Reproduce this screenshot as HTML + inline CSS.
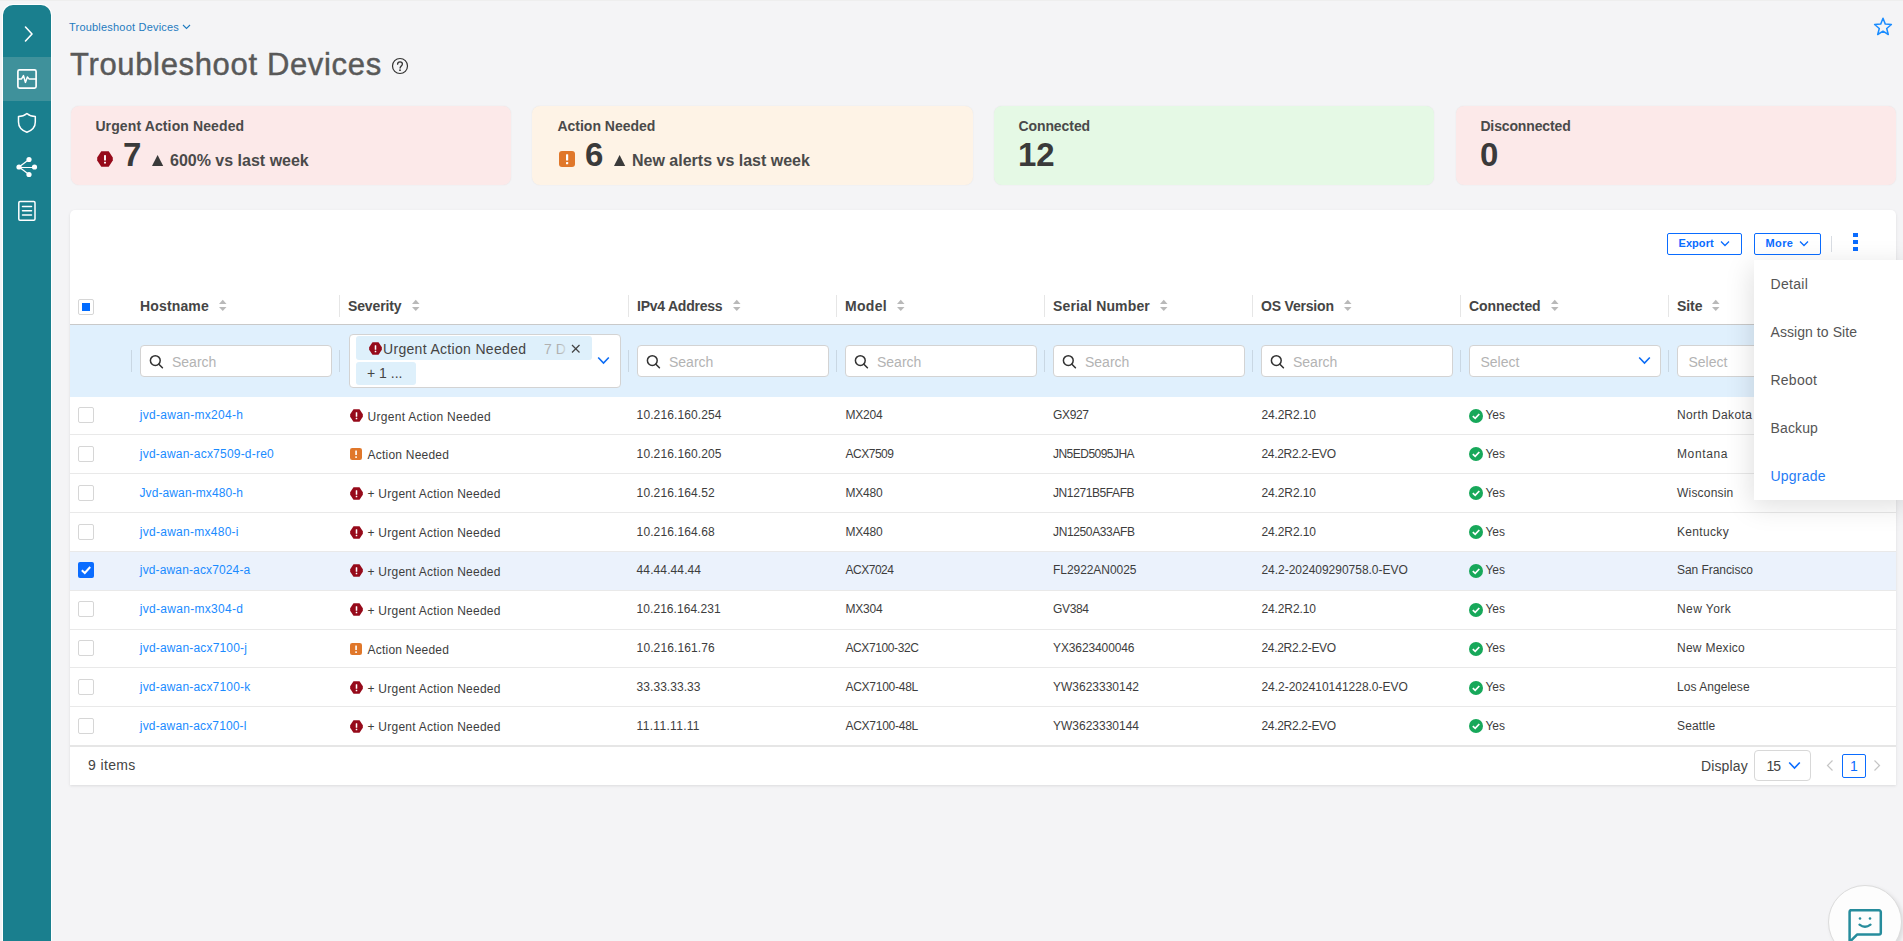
<!DOCTYPE html>
<html><head><meta charset="utf-8">
<style>
*{box-sizing:border-box;margin:0;padding:0}
html,body{width:1903px;height:941px;overflow:hidden}
body{position:relative;background:#f4f4f6;font-family:"Liberation Sans",sans-serif;color:#444}
.a{position:absolute}
.t{position:absolute;line-height:1;white-space:nowrap}
svg{position:absolute;overflow:visible}
</style></head>
<body>

<div class="a" style="left:0px;top:0px;width:1903px;height:1px;background:#eeeeee"></div>
<div class="a" style="left:3px;top:5px;width:48px;height:940px;background:#1a7f8e;border-radius:10px 10px 0 0;box-shadow:0 0 0 1px #fff"></div>
<div class="a" style="left:3px;top:57px;width:48px;height:44px;background:#3f919b"></div>
<svg style="left:0;top:0" width="60" height="240"><g fill="none" stroke="#fff" stroke-linecap="round" stroke-linejoin="round"><polyline points="25.5,27 32,34 25.5,41" stroke-width="1.6"/><rect x="17.9" y="69.9" width="18.2" height="18.2" rx="1.6" stroke-width="1.7"/><polyline points="18,78.9 21.6,78.9 23.5,75.6 25.4,82.4 27.4,76.9 29,78.9 36,78.9" stroke-width="1.5"/><path d="M26.9,113.5 C24.5,115.5 21.5,116.5 18.5,116.5 L18.5,122 C18.5,127 22,130.5 26.9,132.3 C31.8,130.5 35.3,127 35.3,122 L35.3,116.5 C32.3,116.5 29.3,115.5 26.9,113.5 Z" stroke-width="1.5"/><line x1="19" y1="167.5" x2="34.5" y2="167.5" stroke-width="1.2"/><line x1="19" y1="167" x2="29" y2="159.5" stroke-width="1.2"/><line x1="19" y1="167" x2="29" y2="174.5" stroke-width="1.2"/><rect x="18.8" y="201.5" width="16.2" height="18.8" rx="1.2" stroke-width="1.5"/><line x1="22.5" y1="206.5" x2="31.5" y2="206.5" stroke-width="1.5"/><line x1="22.5" y1="210.8" x2="31.5" y2="210.8" stroke-width="1.5"/><line x1="22.5" y1="215" x2="31.5" y2="215" stroke-width="1.5"/></g><g fill="#fff"><circle cx="19" cy="167" r="2.6"/><circle cx="34.5" cy="167" r="2.6"/><circle cx="29" cy="159.5" r="2.6"/><circle cx="29" cy="174.5" r="2.6"/></g></svg>
<div class="t" style="left:69.00px;top:22px;font-size:11px;color:#1f7bbf;letter-spacing:0.204px;">Troubleshoot Devices</div>
<svg style="left:182px;top:23px" width="10" height="8"><polyline points="1,2 4.5,5.5 8,2" fill="none" stroke="#1f7bbf" stroke-width="1.1"/></svg>
<div class="t" style="left:70.00px;top:49px;font-size:31px;color:#595959;letter-spacing:0.656px;-webkit-text-stroke:0.45px #595959;">Troubleshoot Devices</div>
<svg style="left:391px;top:57px" width="18" height="18"><circle cx="9" cy="9" r="7.5" fill="none" stroke="#333" stroke-width="1.2"/><path d="M6.6,7.2 C6.6,5.6 7.7,4.8 9,4.8 C10.4,4.8 11.4,5.7 11.4,7 C11.4,8.6 9.2,9.4 9.1,11" fill="none" stroke="#333" stroke-width="1.3" stroke-linecap="round"/><circle cx="9" cy="13.2" r="0.9" fill="#333"/></svg>
<svg style="left:1870px;top:14px" width="26" height="26"><path d="M13,4.3 L15.3,10.1 L21.4,10.5 L16.7,14.5 L18.3,20.5 L13,17.2 L7.7,20.5 L9.3,14.5 L4.6,10.5 L10.7,10.1 Z" fill="none" stroke="#1a8cff" stroke-width="1.5" stroke-linejoin="round"/></svg>
<div class="a" style="left:70.8px;top:106px;width:440.2px;height:79px;background:#fce9e9;border-radius:8px;box-shadow:0 0 1.5px rgba(0,0,0,.08)"></div>
<div class="t" style="left:95.40px;top:119px;font-size:14px;color:#4a4a4a;font-weight:bold;letter-spacing:0.119px;">Urgent Action Needed</div>
<svg style="left:97px;top:151px" width="16" height="16" viewBox="0 0 16 16"><polygon points="4.3,0.3 11.7,0.3 15.8,6.4 15.8,9.6 11.7,15.7 4.3,15.7 0.2,9.6 0.2,6.4" fill="#960a1a"/><rect x="7.05" y="4" width="1.9" height="5.6" rx="0.4" fill="#fff"/><rect x="7.05" y="10.8" width="1.9" height="1.7" rx="0.3" fill="#fff"/></svg>
<div class="t" style="left:123.00px;top:138px;font-size:33px;color:#3a3a3a;font-weight:bold;">7</div>
<svg style="left:151.7px;top:155px" width="12" height="12"><polygon points="5.6,0 11.2,11 0,11" fill="#3a3a3a"/></svg>
<div class="t" style="left:170.00px;top:153px;font-size:16px;color:#4a4a4a;font-weight:bold;">600% vs last week</div>
<div class="a" style="left:532.4px;top:106px;width:440.2px;height:79px;background:#fef3e6;border-radius:8px;box-shadow:0 0 1.5px rgba(0,0,0,.08)"></div>
<div class="t" style="left:557.40px;top:119px;font-size:14px;color:#4a4a4a;font-weight:bold;letter-spacing:0.000px;">Action Needed</div>
<svg style="left:559px;top:151px" width="16" height="16" viewBox="0 0 16 16"><rect x="0" y="0" width="16" height="16" rx="3" fill="#e0772a"/><rect x="7" y="3.2" width="2.2" height="6.2" rx="0.5" fill="#fff"/><rect x="7" y="11" width="2.2" height="2.2" rx="0.5" fill="#fff"/></svg>
<div class="t" style="left:585.00px;top:138px;font-size:33px;color:#3a3a3a;font-weight:bold;">6</div>
<svg style="left:613.7px;top:155px" width="12" height="12"><polygon points="5.6,0 11.2,11 0,11" fill="#3a3a3a"/></svg>
<div class="t" style="left:632.00px;top:153px;font-size:16px;color:#4a4a4a;font-weight:bold;">New alerts vs last week</div>
<div class="a" style="left:994.0px;top:106px;width:440.2px;height:79px;background:#e5f9e5;border-radius:8px;box-shadow:0 0 1.5px rgba(0,0,0,.08)"></div>
<div class="t" style="left:1018.40px;top:119px;font-size:14px;color:#4a4a4a;font-weight:bold;letter-spacing:-0.072px;">Connected</div>
<div class="t" style="left:1018.00px;top:138px;font-size:33px;color:#3a3a3a;font-weight:bold;">12</div>
<div class="a" style="left:1455.6px;top:106px;width:440.2px;height:79px;background:#fce9e9;border-radius:8px;box-shadow:0 0 1.5px rgba(0,0,0,.08)"></div>
<div class="t" style="left:1480.40px;top:119px;font-size:14px;color:#4a4a4a;font-weight:bold;letter-spacing:-0.131px;">Disconnected</div>
<div class="t" style="left:1480.00px;top:138px;font-size:33px;color:#3a3a3a;font-weight:bold;">0</div>
<div class="a" style="left:70px;top:210px;width:1826px;height:575px;background:#fff;border-radius:5px 5px 0 0;box-shadow:0 1px 3px rgba(0,0,0,.10)"></div>
<div class="a" style="left:1667px;top:233px;width:75px;height:22px;border:1px solid #0a6cff;border-radius:2px;background:#fff"></div><div class="t" style="left:1678.50px;top:238px;font-size:11px;color:#0a6cff;font-weight:bold;letter-spacing:0.066px;">Export</div><svg style="left:1719.7px;top:240px" width="12" height="8"><polyline points="1,1.5 5,5.5 9,1.5" fill="none" stroke="#0a6cff" stroke-width="1.3"/></svg>
<div class="a" style="left:1754px;top:233px;width:67px;height:22px;border:1px solid #0a6cff;border-radius:2px;background:#fff"></div><div class="t" style="left:1765.50px;top:238px;font-size:11px;color:#0a6cff;font-weight:bold;letter-spacing:0.403px;">More</div><svg style="left:1799.0px;top:240px" width="12" height="8"><polyline points="1,1.5 5,5.5 9,1.5" fill="none" stroke="#0a6cff" stroke-width="1.3"/></svg>
<div class="a" style="left:1831px;top:236px;width:1px;height:16px;background:#d9dde3"></div>
<div class="a" style="left:1853px;top:233.3px;width:4.5px;height:4px;background:#0a6cff"></div>
<div class="a" style="left:1853px;top:240.1px;width:4.5px;height:4px;background:#0a6cff"></div>
<div class="a" style="left:1853px;top:246.9px;width:4.5px;height:4px;background:#0a6cff"></div>
<div class="t" style="left:140.00px;top:299px;font-size:14px;color:#454545;font-weight:bold;letter-spacing:0.154px;">Hostname</div>
<svg style="left:219px;top:299px" width="9" height="13"><polygon points="3.75,0.8 7.5,5 0,5" fill="#b9b9b9"/><polygon points="0,7.9 7.5,7.9 3.75,12" fill="#b9b9b9"/></svg>
<div class="t" style="left:348.00px;top:299px;font-size:14px;color:#454545;font-weight:bold;letter-spacing:-0.129px;">Severity</div>
<svg style="left:412px;top:299px" width="9" height="13"><polygon points="3.75,0.8 7.5,5 0,5" fill="#b9b9b9"/><polygon points="0,7.9 7.5,7.9 3.75,12" fill="#b9b9b9"/></svg>
<div class="a" style="left:339px;top:295px;width:1px;height:22px;background:#e6e6e6"></div>
<div class="t" style="left:637.00px;top:299px;font-size:14px;color:#454545;font-weight:bold;letter-spacing:-0.236px;">IPv4 Address</div>
<svg style="left:733px;top:299px" width="9" height="13"><polygon points="3.75,0.8 7.5,5 0,5" fill="#b9b9b9"/><polygon points="0,7.9 7.5,7.9 3.75,12" fill="#b9b9b9"/></svg>
<div class="a" style="left:628px;top:295px;width:1px;height:22px;background:#e6e6e6"></div>
<div class="t" style="left:845.00px;top:299px;font-size:14px;color:#454545;font-weight:bold;letter-spacing:0.310px;">Model</div>
<svg style="left:897px;top:299px" width="9" height="13"><polygon points="3.75,0.8 7.5,5 0,5" fill="#b9b9b9"/><polygon points="0,7.9 7.5,7.9 3.75,12" fill="#b9b9b9"/></svg>
<div class="a" style="left:836px;top:295px;width:1px;height:22px;background:#e6e6e6"></div>
<div class="t" style="left:1053.00px;top:299px;font-size:14px;color:#454545;font-weight:bold;letter-spacing:0.157px;">Serial Number</div>
<svg style="left:1160px;top:299px" width="9" height="13"><polygon points="3.75,0.8 7.5,5 0,5" fill="#b9b9b9"/><polygon points="0,7.9 7.5,7.9 3.75,12" fill="#b9b9b9"/></svg>
<div class="a" style="left:1044px;top:295px;width:1px;height:22px;background:#e6e6e6"></div>
<div class="t" style="left:1261.00px;top:299px;font-size:14px;color:#454545;font-weight:bold;letter-spacing:-0.196px;">OS Version</div>
<svg style="left:1344px;top:299px" width="9" height="13"><polygon points="3.75,0.8 7.5,5 0,5" fill="#b9b9b9"/><polygon points="0,7.9 7.5,7.9 3.75,12" fill="#b9b9b9"/></svg>
<div class="a" style="left:1252px;top:295px;width:1px;height:22px;background:#e6e6e6"></div>
<div class="t" style="left:1469.00px;top:299px;font-size:14px;color:#454545;font-weight:bold;letter-spacing:-0.085px;">Connected</div>
<svg style="left:1551px;top:299px" width="9" height="13"><polygon points="3.75,0.8 7.5,5 0,5" fill="#b9b9b9"/><polygon points="0,7.9 7.5,7.9 3.75,12" fill="#b9b9b9"/></svg>
<div class="a" style="left:1460px;top:295px;width:1px;height:22px;background:#e6e6e6"></div>
<div class="t" style="left:1677.00px;top:299px;font-size:14px;color:#454545;font-weight:bold;letter-spacing:-0.073px;">Site</div>
<svg style="left:1712px;top:299px" width="9" height="13"><polygon points="3.75,0.8 7.5,5 0,5" fill="#b9b9b9"/><polygon points="0,7.9 7.5,7.9 3.75,12" fill="#b9b9b9"/></svg>
<div class="a" style="left:1668px;top:295px;width:1px;height:22px;background:#e6e6e6"></div>
<div class="a" style="left:78px;top:299px;width:16px;height:16px;border:1px solid #d6d6d6;border-radius:2px;background:#fff"></div>
<div class="a" style="left:82px;top:303px;width:8px;height:8px;background:#006bff"></div>
<div class="a" style="left:70px;top:324px;width:1826px;height:1px;background:#c9c9c9"></div>
<div class="a" style="left:70px;top:325px;width:1826px;height:71.5px;background:#e0f0fd"></div>
<div class="a" style="left:131px;top:350px;width:1px;height:22px;background:#c9d7e3"></div>
<div class="a" style="left:339px;top:350px;width:1px;height:22px;background:#c9d7e3"></div>
<div class="a" style="left:628px;top:350px;width:1px;height:22px;background:#c9d7e3"></div>
<div class="a" style="left:836px;top:350px;width:1px;height:22px;background:#c9d7e3"></div>
<div class="a" style="left:1044px;top:350px;width:1px;height:22px;background:#c9d7e3"></div>
<div class="a" style="left:1252px;top:350px;width:1px;height:22px;background:#c9d7e3"></div>
<div class="a" style="left:1460px;top:350px;width:1px;height:22px;background:#c9d7e3"></div>
<div class="a" style="left:1668px;top:350px;width:1px;height:22px;background:#c9d7e3"></div>
<div class="a" style="left:140px;top:345px;width:192px;height:32px;background:#fff;border:1px solid #d3d3d3;border-radius:4px"></div><svg style="left:149px;top:354px" width="16" height="16"><circle cx="6.3" cy="6.6" r="4.9" fill="none" stroke="#333" stroke-width="1.5"/><line x1="9.9" y1="10.2" x2="13.4" y2="13.7" stroke="#333" stroke-width="1.6" stroke-linecap="round"/></svg><div class="t" style="left:172.00px;top:355px;font-size:14px;color:#b3b3b3;">Search</div>
<div class="a" style="left:637px;top:345px;width:192px;height:32px;background:#fff;border:1px solid #d3d3d3;border-radius:4px"></div><svg style="left:646px;top:354px" width="16" height="16"><circle cx="6.3" cy="6.6" r="4.9" fill="none" stroke="#333" stroke-width="1.5"/><line x1="9.9" y1="10.2" x2="13.4" y2="13.7" stroke="#333" stroke-width="1.6" stroke-linecap="round"/></svg><div class="t" style="left:669.00px;top:355px;font-size:14px;color:#b3b3b3;">Search</div>
<div class="a" style="left:845px;top:345px;width:192px;height:32px;background:#fff;border:1px solid #d3d3d3;border-radius:4px"></div><svg style="left:854px;top:354px" width="16" height="16"><circle cx="6.3" cy="6.6" r="4.9" fill="none" stroke="#333" stroke-width="1.5"/><line x1="9.9" y1="10.2" x2="13.4" y2="13.7" stroke="#333" stroke-width="1.6" stroke-linecap="round"/></svg><div class="t" style="left:877.00px;top:355px;font-size:14px;color:#b3b3b3;">Search</div>
<div class="a" style="left:1053px;top:345px;width:192px;height:32px;background:#fff;border:1px solid #d3d3d3;border-radius:4px"></div><svg style="left:1062px;top:354px" width="16" height="16"><circle cx="6.3" cy="6.6" r="4.9" fill="none" stroke="#333" stroke-width="1.5"/><line x1="9.9" y1="10.2" x2="13.4" y2="13.7" stroke="#333" stroke-width="1.6" stroke-linecap="round"/></svg><div class="t" style="left:1085.00px;top:355px;font-size:14px;color:#b3b3b3;">Search</div>
<div class="a" style="left:1261px;top:345px;width:192px;height:32px;background:#fff;border:1px solid #d3d3d3;border-radius:4px"></div><svg style="left:1270px;top:354px" width="16" height="16"><circle cx="6.3" cy="6.6" r="4.9" fill="none" stroke="#333" stroke-width="1.5"/><line x1="9.9" y1="10.2" x2="13.4" y2="13.7" stroke="#333" stroke-width="1.6" stroke-linecap="round"/></svg><div class="t" style="left:1293.00px;top:355px;font-size:14px;color:#b3b3b3;">Search</div>
<div class="a" style="left:349px;top:334px;width:272px;height:54px;background:#fff;border:1px solid #d3d3d3;border-radius:4px"></div>
<div class="a" style="left:356px;top:336px;width:236px;height:24px;background:#def0fb;border-radius:3px"></div>
<svg style="left:368.5px;top:342px" width="13" height="13" viewBox="0 0 16 16"><polygon points="4.3,0.3 11.7,0.3 15.8,6.4 15.8,9.6 11.7,15.7 4.3,15.7 0.2,9.6 0.2,6.4" fill="#960a1a"/><rect x="7.05" y="4" width="1.9" height="5.6" rx="0.4" fill="#fff"/><rect x="7.05" y="10.8" width="1.9" height="1.7" rx="0.3" fill="#fff"/></svg>
<div class="t" style="left:383.00px;top:342px;font-size:14px;color:#444;letter-spacing:0.320px;">Urgent Action Needed</div>
<div class="t" style="left:544.00px;top:342px;font-size:14px;color:#b0b0b0;">7 D</div>
<div class="a" style="left:559px;top:338px;width:12px;height:20px;background:linear-gradient(to right,rgba(222,240,251,0),#def0fb 85%)"></div>
<svg style="left:570px;top:343px" width="12" height="12"><g stroke="#444" stroke-width="1.3"><line x1="2" y1="2" x2="9.5" y2="9.5"/><line x1="9.5" y1="2" x2="2" y2="9.5"/></g></svg>
<div class="a" style="left:356px;top:362px;width:60px;height:23px;background:#def0fb;border-radius:3px"></div>
<div class="t" style="left:367.00px;top:366px;font-size:14px;color:#444;">+ 1 ...</div>
<svg style="left:597px;top:356px" width="14" height="10"><polyline points="1.2,1.5 6.5,7 11.8,1.5" fill="none" stroke="#0b6cf5" stroke-width="1.6"/></svg>
<div class="a" style="left:1469px;top:345px;width:192px;height:32px;background:#fff;border:1px solid #d3d3d3;border-radius:4px"></div><div class="t" style="left:1480.50px;top:355px;font-size:14px;color:#b3b3b3;">Select</div><svg style="left:1638px;top:356px" width="14" height="10"><polyline points="1.2,1.5 6.5,7 11.8,1.5" fill="none" stroke="#0b6cf5" stroke-width="1.6"/></svg>
<div class="a" style="left:1677px;top:345px;width:192px;height:32px;background:#fff;border:1px solid #d3d3d3;border-radius:4px"></div><div class="t" style="left:1688.50px;top:355px;font-size:14px;color:#b3b3b3;">Select</div>
<div class="a" style="left:70px;top:434.35px;width:1826px;height:1px;background:#e9e9e9"></div>
<div class="a" style="left:78px;top:407.0px;width:16px;height:16px;border:1px solid #d6d6d6;border-radius:2px;background:#fff"></div>
<div class="t" style="left:139.86px;top:409px;font-size:12px;color:#1a8bff;letter-spacing:0.292px;">jvd-awan-mx204-h</div>
<svg style="left:349.5px;top:409.0px" width="13" height="13" viewBox="0 0 16 16"><polygon points="4.3,0.3 11.7,0.3 15.8,6.4 15.8,9.6 11.7,15.7 4.3,15.7 0.2,9.6 0.2,6.4" fill="#960a1a"/><rect x="7.05" y="4" width="1.9" height="5.6" rx="0.4" fill="#fff"/><rect x="7.05" y="10.8" width="1.9" height="1.7" rx="0.3" fill="#fff"/></svg>
<div class="t" style="left:367.50px;top:411px;font-size:12px;color:#3d3d3d;letter-spacing:0.302px;">Urgent Action Needed</div>
<div class="t" style="left:636.60px;top:409px;font-size:12px;color:#3d3d3d;letter-spacing:0.108px;">10.216.160.254</div>
<div class="t" style="left:845.40px;top:409px;font-size:12px;color:#3d3d3d;letter-spacing:-0.160px;">MX204</div>
<div class="t" style="left:1053.00px;top:409px;font-size:12px;color:#3d3d3d;letter-spacing:-0.330px;">GX927</div>
<div class="t" style="left:1261.40px;top:409px;font-size:12px;color:#3d3d3d;letter-spacing:-0.103px;">24.2R2.10</div>
<svg style="left:1469px;top:408.60px" width="14" height="14"><circle cx="7" cy="7" r="7" fill="#17a85a"/><polyline points="3.8,7.2 6.2,9.4 10.3,5" fill="none" stroke="#fff" stroke-width="1.7"/></svg>
<div class="t" style="left:1485.50px;top:409px;font-size:12px;color:#3d3d3d;letter-spacing:-0.030px;">Yes</div>
<div class="t" style="left:1677.00px;top:409px;font-size:12px;color:#3d3d3d;letter-spacing:0.382px;">North Dakota</div>
<div class="a" style="left:70px;top:473.20000000000005px;width:1826px;height:1px;background:#e9e9e9"></div>
<div class="a" style="left:78px;top:445.85px;width:16px;height:16px;border:1px solid #d6d6d6;border-radius:2px;background:#fff"></div>
<div class="t" style="left:139.86px;top:448px;font-size:12px;color:#1a8bff;letter-spacing:0.213px;">jvd-awan-acx7509-d-re0</div>
<svg style="left:350px;top:448.35px" width="12" height="12" viewBox="0 0 16 16"><rect x="0" y="0" width="16" height="16" rx="3" fill="#e0772a"/><rect x="7" y="3.2" width="2.2" height="6.2" rx="0.5" fill="#fff"/><rect x="7" y="11" width="2.2" height="2.2" rx="0.5" fill="#fff"/></svg>
<div class="t" style="left:367.50px;top:449px;font-size:12px;color:#3d3d3d;letter-spacing:0.223px;">Action Needed</div>
<div class="t" style="left:636.60px;top:448px;font-size:12px;color:#3d3d3d;letter-spacing:0.108px;">10.216.160.205</div>
<div class="t" style="left:845.40px;top:448px;font-size:12px;color:#3d3d3d;letter-spacing:-0.460px;">ACX7509</div>
<div class="t" style="left:1053.00px;top:448px;font-size:12px;color:#3d3d3d;letter-spacing:-0.524px;">JN5ED5095JHA</div>
<div class="t" style="left:1261.40px;top:448px;font-size:12px;color:#3d3d3d;letter-spacing:-0.300px;">24.2R2.2-EVO</div>
<svg style="left:1469px;top:447.45px" width="14" height="14"><circle cx="7" cy="7" r="7" fill="#17a85a"/><polyline points="3.8,7.2 6.2,9.4 10.3,5" fill="none" stroke="#fff" stroke-width="1.7"/></svg>
<div class="t" style="left:1485.50px;top:448px;font-size:12px;color:#3d3d3d;letter-spacing:-0.030px;">Yes</div>
<div class="t" style="left:1677.00px;top:448px;font-size:12px;color:#3d3d3d;letter-spacing:0.617px;">Montana</div>
<div class="a" style="left:70px;top:512.05px;width:1826px;height:1px;background:#e9e9e9"></div>
<div class="a" style="left:78px;top:484.7px;width:16px;height:16px;border:1px solid #d6d6d6;border-radius:2px;background:#fff"></div>
<div class="t" style="left:139.50px;top:487px;font-size:12px;color:#1a8bff;letter-spacing:0.100px;">Jvd-awan-mx480-h</div>
<svg style="left:349.5px;top:486.7px" width="13" height="13" viewBox="0 0 16 16"><polygon points="4.3,0.3 11.7,0.3 15.8,6.4 15.8,9.6 11.7,15.7 4.3,15.7 0.2,9.6 0.2,6.4" fill="#960a1a"/><rect x="7.05" y="4" width="1.9" height="5.6" rx="0.4" fill="#fff"/><rect x="7.05" y="10.8" width="1.9" height="1.7" rx="0.3" fill="#fff"/></svg>
<div class="t" style="left:367.50px;top:488px;font-size:12px;color:#3d3d3d;letter-spacing:0.248px;">+ Urgent Action Needed</div>
<div class="t" style="left:636.60px;top:487px;font-size:12px;color:#3d3d3d;letter-spacing:0.110px;">10.216.164.52</div>
<div class="t" style="left:845.40px;top:487px;font-size:12px;color:#3d3d3d;letter-spacing:-0.210px;">MX480</div>
<div class="t" style="left:1053.00px;top:487px;font-size:12px;color:#3d3d3d;letter-spacing:-0.404px;">JN1271B5FAFB</div>
<div class="t" style="left:1261.40px;top:487px;font-size:12px;color:#3d3d3d;letter-spacing:-0.103px;">24.2R2.10</div>
<svg style="left:1469px;top:486.30px" width="14" height="14"><circle cx="7" cy="7" r="7" fill="#17a85a"/><polyline points="3.8,7.2 6.2,9.4 10.3,5" fill="none" stroke="#fff" stroke-width="1.7"/></svg>
<div class="t" style="left:1485.50px;top:487px;font-size:12px;color:#3d3d3d;letter-spacing:-0.030px;">Yes</div>
<div class="t" style="left:1677.00px;top:487px;font-size:12px;color:#3d3d3d;letter-spacing:0.197px;">Wisconsin</div>
<div class="a" style="left:70px;top:550.9px;width:1826px;height:1px;background:#e9e9e9"></div>
<div class="a" style="left:78px;top:523.55px;width:16px;height:16px;border:1px solid #d6d6d6;border-radius:2px;background:#fff"></div>
<div class="t" style="left:139.86px;top:526px;font-size:12px;color:#1a8bff;letter-spacing:0.264px;">jvd-awan-mx480-i</div>
<svg style="left:349.5px;top:525.55px" width="13" height="13" viewBox="0 0 16 16"><polygon points="4.3,0.3 11.7,0.3 15.8,6.4 15.8,9.6 11.7,15.7 4.3,15.7 0.2,9.6 0.2,6.4" fill="#960a1a"/><rect x="7.05" y="4" width="1.9" height="5.6" rx="0.4" fill="#fff"/><rect x="7.05" y="10.8" width="1.9" height="1.7" rx="0.3" fill="#fff"/></svg>
<div class="t" style="left:367.50px;top:527px;font-size:12px;color:#3d3d3d;letter-spacing:0.248px;">+ Urgent Action Needed</div>
<div class="t" style="left:636.60px;top:526px;font-size:12px;color:#3d3d3d;letter-spacing:0.110px;">10.216.164.68</div>
<div class="t" style="left:845.40px;top:526px;font-size:12px;color:#3d3d3d;letter-spacing:-0.210px;">MX480</div>
<div class="t" style="left:1053.00px;top:526px;font-size:12px;color:#3d3d3d;letter-spacing:-0.367px;">JN1250A33AFB</div>
<div class="t" style="left:1261.40px;top:526px;font-size:12px;color:#3d3d3d;letter-spacing:-0.103px;">24.2R2.10</div>
<svg style="left:1469px;top:525.15px" width="14" height="14"><circle cx="7" cy="7" r="7" fill="#17a85a"/><polyline points="3.8,7.2 6.2,9.4 10.3,5" fill="none" stroke="#fff" stroke-width="1.7"/></svg>
<div class="t" style="left:1485.50px;top:526px;font-size:12px;color:#3d3d3d;letter-spacing:-0.030px;">Yes</div>
<div class="t" style="left:1677.00px;top:526px;font-size:12px;color:#3d3d3d;letter-spacing:0.326px;">Kentucky</div>
<div class="a" style="left:70px;top:551.9px;width:1826px;height:38.85px;background:#ebf2fc"></div>
<div class="a" style="left:70px;top:589.75px;width:1826px;height:1px;background:#e9e9e9"></div>
<div class="a" style="left:78px;top:562.4px;width:16px;height:16px;background:#0a6cff;border-radius:2px"></div>
<svg style="left:78px;top:562.40px" width="16" height="16"><polyline points="3.8,8.2 6.8,11 12.2,5" fill="none" stroke="#fff" stroke-width="2"/></svg>
<div class="t" style="left:139.86px;top:564px;font-size:12px;color:#1a8bff;letter-spacing:0.136px;">jvd-awan-acx7024-a</div>
<svg style="left:349.5px;top:564.4px" width="13" height="13" viewBox="0 0 16 16"><polygon points="4.3,0.3 11.7,0.3 15.8,6.4 15.8,9.6 11.7,15.7 4.3,15.7 0.2,9.6 0.2,6.4" fill="#960a1a"/><rect x="7.05" y="4" width="1.9" height="5.6" rx="0.4" fill="#fff"/><rect x="7.05" y="10.8" width="1.9" height="1.7" rx="0.3" fill="#fff"/></svg>
<div class="t" style="left:367.50px;top:566px;font-size:12px;color:#3d3d3d;letter-spacing:0.248px;">+ Urgent Action Needed</div>
<div class="t" style="left:636.60px;top:564px;font-size:12px;color:#3d3d3d;letter-spacing:0.104px;">44.44.44.44</div>
<div class="t" style="left:845.40px;top:564px;font-size:12px;color:#3d3d3d;letter-spacing:-0.460px;">ACX7024</div>
<div class="t" style="left:1053.00px;top:564px;font-size:12px;color:#3d3d3d;letter-spacing:-0.055px;">FL2922AN0025</div>
<div class="t" style="left:1261.40px;top:564px;font-size:12px;color:#3d3d3d;letter-spacing:-0.016px;">24.2-202409290758.0-EVO</div>
<svg style="left:1469px;top:564.00px" width="14" height="14"><circle cx="7" cy="7" r="7" fill="#17a85a"/><polyline points="3.8,7.2 6.2,9.4 10.3,5" fill="none" stroke="#fff" stroke-width="1.7"/></svg>
<div class="t" style="left:1485.50px;top:564px;font-size:12px;color:#3d3d3d;letter-spacing:-0.030px;">Yes</div>
<div class="t" style="left:1677.00px;top:564px;font-size:12px;color:#3d3d3d;letter-spacing:-0.057px;">San Francisco</div>
<div class="a" style="left:70px;top:628.6px;width:1826px;height:1px;background:#e9e9e9"></div>
<div class="a" style="left:78px;top:601.25px;width:16px;height:16px;border:1px solid #d6d6d6;border-radius:2px;background:#fff"></div>
<div class="t" style="left:139.86px;top:603px;font-size:12px;color:#1a8bff;letter-spacing:0.292px;">jvd-awan-mx304-d</div>
<svg style="left:349.5px;top:603.25px" width="13" height="13" viewBox="0 0 16 16"><polygon points="4.3,0.3 11.7,0.3 15.8,6.4 15.8,9.6 11.7,15.7 4.3,15.7 0.2,9.6 0.2,6.4" fill="#960a1a"/><rect x="7.05" y="4" width="1.9" height="5.6" rx="0.4" fill="#fff"/><rect x="7.05" y="10.8" width="1.9" height="1.7" rx="0.3" fill="#fff"/></svg>
<div class="t" style="left:367.50px;top:605px;font-size:12px;color:#3d3d3d;letter-spacing:0.248px;">+ Urgent Action Needed</div>
<div class="t" style="left:636.60px;top:603px;font-size:12px;color:#3d3d3d;letter-spacing:0.046px;">10.216.164.231</div>
<div class="t" style="left:845.40px;top:603px;font-size:12px;color:#3d3d3d;letter-spacing:-0.160px;">MX304</div>
<div class="t" style="left:1053.00px;top:603px;font-size:12px;color:#3d3d3d;letter-spacing:-0.330px;">GV384</div>
<div class="t" style="left:1261.40px;top:603px;font-size:12px;color:#3d3d3d;letter-spacing:-0.103px;">24.2R2.10</div>
<svg style="left:1469px;top:602.85px" width="14" height="14"><circle cx="7" cy="7" r="7" fill="#17a85a"/><polyline points="3.8,7.2 6.2,9.4 10.3,5" fill="none" stroke="#fff" stroke-width="1.7"/></svg>
<div class="t" style="left:1485.50px;top:603px;font-size:12px;color:#3d3d3d;letter-spacing:-0.030px;">Yes</div>
<div class="t" style="left:1677.00px;top:603px;font-size:12px;color:#3d3d3d;letter-spacing:0.434px;">New York</div>
<div class="a" style="left:70px;top:667.45px;width:1826px;height:1px;background:#e9e9e9"></div>
<div class="a" style="left:78px;top:640.1px;width:16px;height:16px;border:1px solid #d6d6d6;border-radius:2px;background:#fff"></div>
<div class="t" style="left:139.86px;top:642px;font-size:12px;color:#1a8bff;letter-spacing:0.176px;">jvd-awan-acx7100-j</div>
<svg style="left:350px;top:642.6px" width="12" height="12" viewBox="0 0 16 16"><rect x="0" y="0" width="16" height="16" rx="3" fill="#e0772a"/><rect x="7" y="3.2" width="2.2" height="6.2" rx="0.5" fill="#fff"/><rect x="7" y="11" width="2.2" height="2.2" rx="0.5" fill="#fff"/></svg>
<div class="t" style="left:367.50px;top:644px;font-size:12px;color:#3d3d3d;letter-spacing:0.223px;">Action Needed</div>
<div class="t" style="left:636.60px;top:642px;font-size:12px;color:#3d3d3d;letter-spacing:0.110px;">10.216.161.76</div>
<div class="t" style="left:845.40px;top:642px;font-size:12px;color:#3d3d3d;letter-spacing:-0.380px;">ACX7100-32C</div>
<div class="t" style="left:1053.00px;top:642px;font-size:12px;color:#3d3d3d;letter-spacing:-0.109px;">YX3623400046</div>
<div class="t" style="left:1261.40px;top:642px;font-size:12px;color:#3d3d3d;letter-spacing:-0.300px;">24.2R2.2-EVO</div>
<svg style="left:1469px;top:641.70px" width="14" height="14"><circle cx="7" cy="7" r="7" fill="#17a85a"/><polyline points="3.8,7.2 6.2,9.4 10.3,5" fill="none" stroke="#fff" stroke-width="1.7"/></svg>
<div class="t" style="left:1485.50px;top:642px;font-size:12px;color:#3d3d3d;letter-spacing:-0.030px;">Yes</div>
<div class="t" style="left:1677.00px;top:642px;font-size:12px;color:#3d3d3d;letter-spacing:0.267px;">New Mexico</div>
<div class="a" style="left:70px;top:706.3000000000001px;width:1826px;height:1px;background:#e9e9e9"></div>
<div class="a" style="left:78px;top:678.95px;width:16px;height:16px;border:1px solid #d6d6d6;border-radius:2px;background:#fff"></div>
<div class="t" style="left:139.86px;top:681px;font-size:12px;color:#1a8bff;letter-spacing:0.172px;">jvd-awan-acx7100-k</div>
<svg style="left:349.5px;top:680.95px" width="13" height="13" viewBox="0 0 16 16"><polygon points="4.3,0.3 11.7,0.3 15.8,6.4 15.8,9.6 11.7,15.7 4.3,15.7 0.2,9.6 0.2,6.4" fill="#960a1a"/><rect x="7.05" y="4" width="1.9" height="5.6" rx="0.4" fill="#fff"/><rect x="7.05" y="10.8" width="1.9" height="1.7" rx="0.3" fill="#fff"/></svg>
<div class="t" style="left:367.50px;top:683px;font-size:12px;color:#3d3d3d;letter-spacing:0.248px;">+ Urgent Action Needed</div>
<div class="t" style="left:636.60px;top:681px;font-size:12px;color:#3d3d3d;letter-spacing:0.044px;">33.33.33.33</div>
<div class="t" style="left:845.40px;top:681px;font-size:12px;color:#3d3d3d;letter-spacing:-0.256px;">ACX7100-48L</div>
<div class="t" style="left:1053.00px;top:681px;font-size:12px;color:#3d3d3d;letter-spacing:-0.004px;">YW3623330142</div>
<div class="t" style="left:1261.40px;top:681px;font-size:12px;color:#3d3d3d;letter-spacing:-0.016px;">24.2-202410141228.0-EVO</div>
<svg style="left:1469px;top:680.55px" width="14" height="14"><circle cx="7" cy="7" r="7" fill="#17a85a"/><polyline points="3.8,7.2 6.2,9.4 10.3,5" fill="none" stroke="#fff" stroke-width="1.7"/></svg>
<div class="t" style="left:1485.50px;top:681px;font-size:12px;color:#3d3d3d;letter-spacing:-0.030px;">Yes</div>
<div class="t" style="left:1677.00px;top:681px;font-size:12px;color:#3d3d3d;letter-spacing:0.045px;">Los Angelese</div>
<div class="a" style="left:78px;top:717.8px;width:16px;height:16px;border:1px solid #d6d6d6;border-radius:2px;background:#fff"></div>
<div class="t" style="left:139.86px;top:720px;font-size:12px;color:#1a8bff;letter-spacing:0.147px;">jvd-awan-acx7100-l</div>
<svg style="left:349.5px;top:719.8px" width="13" height="13" viewBox="0 0 16 16"><polygon points="4.3,0.3 11.7,0.3 15.8,6.4 15.8,9.6 11.7,15.7 4.3,15.7 0.2,9.6 0.2,6.4" fill="#960a1a"/><rect x="7.05" y="4" width="1.9" height="5.6" rx="0.4" fill="#fff"/><rect x="7.05" y="10.8" width="1.9" height="1.7" rx="0.3" fill="#fff"/></svg>
<div class="t" style="left:367.50px;top:721px;font-size:12px;color:#3d3d3d;letter-spacing:0.248px;">+ Urgent Action Needed</div>
<div class="t" style="left:636.60px;top:720px;font-size:12px;color:#3d3d3d;letter-spacing:0.312px;">11.11.11.11</div>
<div class="t" style="left:845.40px;top:720px;font-size:12px;color:#3d3d3d;letter-spacing:-0.256px;">ACX7100-48L</div>
<div class="t" style="left:1053.00px;top:720px;font-size:12px;color:#3d3d3d;letter-spacing:-0.004px;">YW3623330144</div>
<div class="t" style="left:1261.40px;top:720px;font-size:12px;color:#3d3d3d;letter-spacing:-0.300px;">24.2R2.2-EVO</div>
<svg style="left:1469px;top:719.40px" width="14" height="14"><circle cx="7" cy="7" r="7" fill="#17a85a"/><polyline points="3.8,7.2 6.2,9.4 10.3,5" fill="none" stroke="#fff" stroke-width="1.7"/></svg>
<div class="t" style="left:1485.50px;top:720px;font-size:12px;color:#3d3d3d;letter-spacing:-0.030px;">Yes</div>
<div class="t" style="left:1677.00px;top:720px;font-size:12px;color:#3d3d3d;letter-spacing:0.147px;">Seattle</div>
<div class="a" style="left:70px;top:745px;width:1826px;height:2px;background:#e6e6e6"></div>
<div class="t" style="left:88.00px;top:758px;font-size:14px;color:#444;letter-spacing:0.370px;">9 items</div>
<div class="t" style="left:1701.00px;top:759px;font-size:14px;color:#444;letter-spacing:0.130px;">Display</div>
<div class="a" style="left:1754px;top:750px;width:57px;height:31px;background:#fff;border:1px solid #d8d8d8;border-radius:4px"></div>
<div class="t" style="left:1766.50px;top:759px;font-size:14px;color:#444;letter-spacing:-1.040px;">15</div>
<svg style="left:1788px;top:761px" width="14" height="10"><polyline points="1.2,1.5 6.5,7 11.8,1.5" fill="none" stroke="#0a6cff" stroke-width="1.6"/></svg>
<svg style="left:1825px;top:759px" width="10" height="14"><polyline points="7.5,1.5 2.5,6.5 7.5,11.5" fill="none" stroke="#c5c5c5" stroke-width="1.2"/></svg>
<div class="a" style="left:1842px;top:754px;width:24px;height:24px;border:1px solid #0a6cff;border-radius:2px;background:#fff"></div>
<div class="t" style="left:1850.00px;top:759px;font-size:14px;color:#0a6cff;">1</div>
<svg style="left:1872px;top:759px" width="10" height="14"><polyline points="2.5,1.5 7.5,6.5 2.5,11.5" fill="none" stroke="#c5c5c5" stroke-width="1.2"/></svg>
<div class="a" style="left:1754px;top:260px;width:160px;height:240px;background:#fff;box-shadow:-2px 6px 26px rgba(0,0,0,.13)"></div>
<div class="t" style="left:1770.50px;top:277px;font-size:14px;color:#555;letter-spacing:0.292px;">Detail</div>
<div class="t" style="left:1770.50px;top:325px;font-size:14px;color:#555;letter-spacing:0.066px;">Assign to Site</div>
<div class="t" style="left:1770.50px;top:373px;font-size:14px;color:#555;letter-spacing:0.236px;">Reboot</div>
<div class="t" style="left:1770.50px;top:421px;font-size:14px;color:#555;letter-spacing:0.128px;">Backup</div>
<div class="t" style="left:1770.50px;top:469px;font-size:14px;color:#1f7bf5;letter-spacing:0.207px;">Upgrade</div>
<div class="a" style="left:1828px;top:885px;width:74px;height:74px;border-radius:50%;background:#fdfdfd;border:1px solid #dcdcdc;box-shadow:2px 2px 4px rgba(0,0,0,.10)"></div>
<svg style="left:1840px;top:900px" width="50" height="50"><path d="M10.5,10.3 H39 a1.8,1.8 0 0 1 1.8,1.8 V32.8 a1.8,1.8 0 0 1 -1.8,1.8 H17 L9.6,42 V12.1 a1.8,1.8 0 0 1 1.8,-1.8 Z" fill="none" stroke="#268c9c" stroke-width="2.5" stroke-linejoin="round"/><circle cx="20" cy="18.5" r="1.3" fill="#268c9c"/><circle cx="30" cy="18.5" r="1.3" fill="#268c9c"/><path d="M19.5,24.6 Q25,29 30.5,24.6" fill="none" stroke="#268c9c" stroke-width="2.3" stroke-linecap="round"/></svg>
</body></html>
